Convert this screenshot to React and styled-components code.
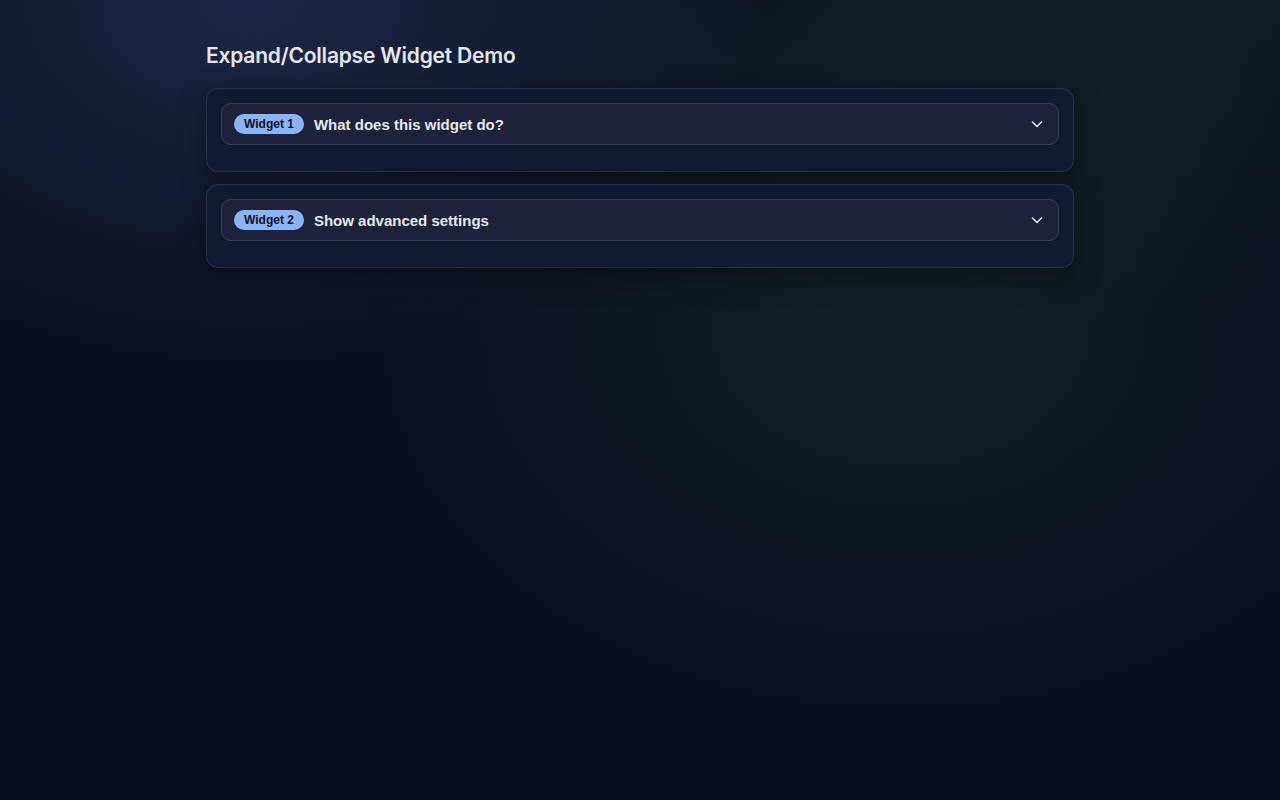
import React from 'react'
import styled, {createGlobalStyle} from 'styled-components'

const GlobalStyle = createGlobalStyle`
    html, body {
        margin: 0;
        padding: 0;
        min-height: 100%;
    }
    body {
        background-color: #0a101d;
        font-family: "Liberation Sans", Arial, sans-serif;
        color: #e6e9f2;
    }
`;

const Page = styled.div`
    min-height: 100vh;
    background:
        radial-gradient(ellipse 520px 360px at 250px 0px, rgba(32, 44, 78, 0.85), rgba(32, 44, 78, 0) 100%),
        radial-gradient(ellipse 520px 380px at 900px 330px, rgba(24, 46, 44, 0.55), rgba(24, 46, 44, 0) 100%),
        radial-gradient(ellipse 700px 320px at 1100px 0px, rgba(20, 34, 40, 0.75), rgba(20, 34, 40, 0) 100%),
        #0a101d;
`;

const Container = styled.main`
    max-width: 868px;
    margin: 0 auto;
    padding-top: 42px;
`;

const Title = styled.h1`
    font-family: Inter, "Liberation Sans", sans-serif;
    font-weight: 600;
    font-size: 21px;
    line-height: 28px;
    letter-spacing: -0.01em;
    color: #e4e7f2;
    margin: 0 0 18px 0;
`;

const List = styled.div`
    display: flex;
    flex-direction: column;
    gap: 12px;
`;

const Card = styled.section`
    background: linear-gradient(180deg, #121933 0%, #111a33 100%);
    border: 1px solid #2a3249;
    border-radius: 12px;
    padding: 14px 14px 26px 14px;
    box-shadow: 0 8px 28px rgba(0, 0, 0, 0.35);
`;

const Header = styled.button`
    width: 100%;
    height: 42px;
    display: flex;
    align-items: center;
    gap: 10px;
    padding: 0 14px 0 12px;
    box-sizing: border-box;
    background: #1d2239;
    border: 1px solid #363d55;
    border-radius: 10px;
    cursor: pointer;
    text-align: left;
`;

const Badge = styled.span`
    display: inline-flex;
    align-items: center;
    justify-content: center;
    height: 20px;
    padding: 0 10px;
    border-radius: 999px;
    background: #8ab4f8;
    color: #0c1222;
    font-family: "Liberation Sans", Arial, sans-serif;
    font-weight: 700;
    font-size: 12px;
`;

const Question = styled.span`
    flex: 1;
    font-family: "Liberation Sans", Arial, sans-serif;
    font-weight: 700;
    font-size: 15px;
    color: #e6e9f2;
`;

const Chevron = styled.svg`
    width: 14px;
    height: 14px;
    flex-shrink: 0;
    color: #d8dcea;
`;

const widgets = [
    {id: 1, label: 'Widget 1', title: 'What does this widget do?'},
    {id: 2, label: 'Widget 2', title: 'Show advanced settings'},
]

function App() {
    return (
        <Page>
            <GlobalStyle />
            <Container>
                <Title>Expand/Collapse Widget Demo</Title>
                <List>
                    {widgets.map(w => (
                        <Card key={w.id}>
                            <Header aria-expanded="false">
                                <Badge>{w.label}</Badge>
                                <Question>{w.title}</Question>
                                <Chevron viewBox="0 0 14 14" fill="none" stroke="currentColor" strokeWidth="1.6" strokeLinecap="round" strokeLinejoin="round">
                                    <path d="M2.5 5l4.5 4.5 4.5-4.5" />
                                </Chevron>
                            </Header>
                        </Card>
                    ))}
                </List>
            </Container>
        </Page>
    )
}

export default App;
